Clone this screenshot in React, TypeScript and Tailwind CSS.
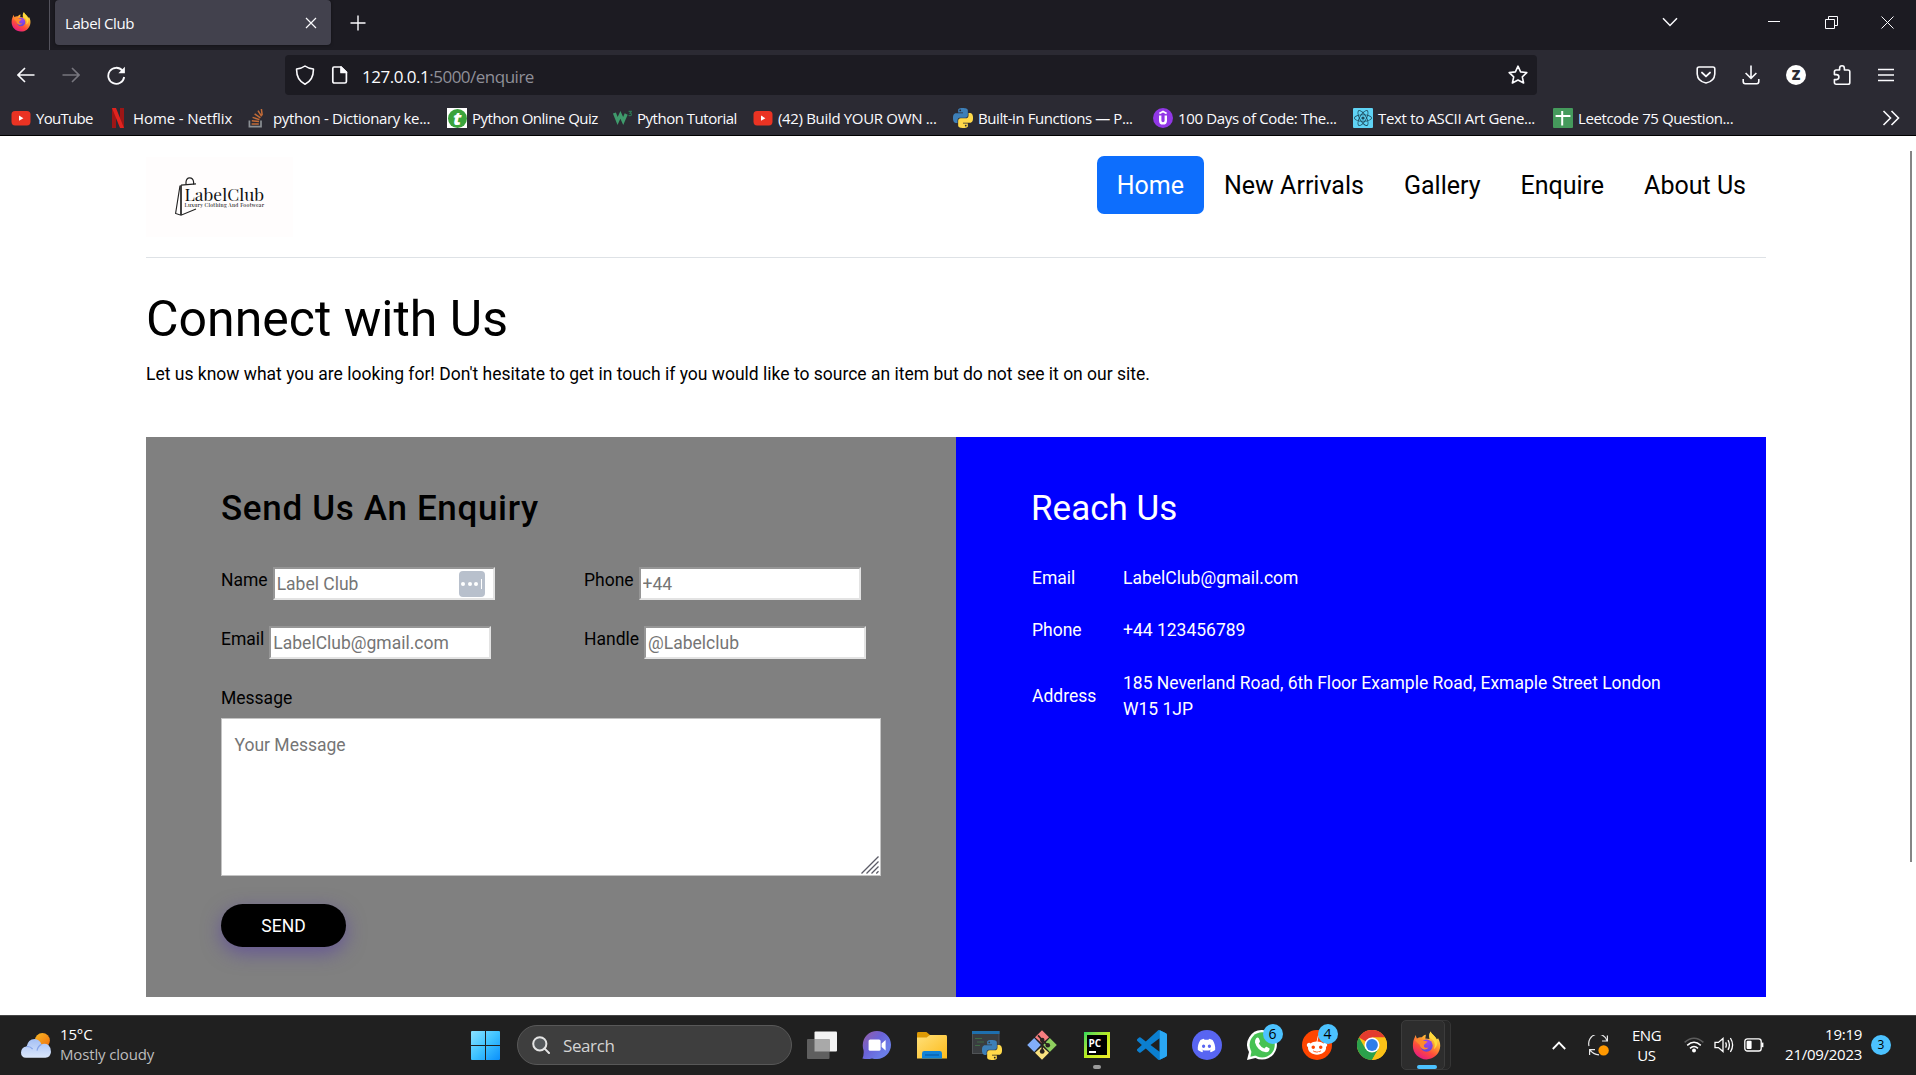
import type { ReactNode } from "react";
import { FaDiscord, FaReact, FaRedditAlien } from "react-icons/fa";

/* ---------- Brand marks ---------- */

function Firefox({ className }: { className: string }) {
  return (
    <svg viewBox="0 0 28 29" className={className}>
      <defs>
        <linearGradient id="ffBody" x1="0.8" y1="0.05" x2="0.25" y2="1">
          <stop offset="0" stopColor="#fff44f" />
          <stop offset="0.35" stopColor="#ffa130" />
          <stop offset="0.65" stopColor="#ff4c3b" />
          <stop offset="1" stopColor="#e5158a" />
        </linearGradient>
        <radialGradient id="ffGlobe" cx="0.6" cy="0.25" r="0.8">
          <stop offset="0" stopColor="#a044f0" />
          <stop offset="1" stopColor="#5b45d6" />
        </radialGradient>
      </defs>
      <path
        d="M18.2 0.4 C19.2 3.6 23.4 5.2 24.2 8.6 L25.6 7.2 C27.6 10.2 28.2 14 27.4 17.6 C26 24 20.4 28.4 14 28.4 C6.4 28.4 0.4 22.4 0.4 15 C0.4 11.4 1 8.6 2.4 6 L3 4 L4.4 7.4 C6 6.4 7.6 6 9.4 6.2 C10.6 4.8 11.8 4 13.4 3.8 L12.8 7.4 L17 8 C16 5 16.6 2.4 18.2 0.4Z"
        fill="url(#ffBody)"
      />
      <circle cx="14" cy="14.6" r="6.2" fill="url(#ffGlobe)" />
      <path d="M2.4 9 C5 7.4 8.4 7.6 10.4 9.6 C12 10.2 13.4 10 15 10.6 C14.4 12.4 12 12.6 11.4 14.4 C11.2 16.4 13.6 17.4 16 16.4 C14.6 19 9.6 19.2 8 16 C7 14 7.4 12.8 5.6 12.4Z" fill="#ff8a2c" />
      <path d="M18 7.6 C22 9.4 23.6 14 21.2 18.2 C24.6 16.4 25.6 12 24.2 8.6 C23.4 5.2 19.2 3.6 18.2 0.4 C16.6 2.4 16.8 5.4 18 7.6Z" fill="#ffd93b" />
    </svg>
  );
}

function Python({ className }: { className: string }) {
  return (
    <svg viewBox="0 0 24 24" className={className}>
      <path
        fill="#3d7fb8"
        d="M14.25.18l.9.2.73.26.59.3.45.32.34.34.25.34.16.33.1.3.04.26.02.2-.01.13V8.5l-.05.63-.13.55-.21.46-.26.38-.3.31-.33.25-.35.19-.35.14-.33.1-.3.07-.26.04-.21.02H8.77l-.69.05-.59.14-.5.22-.41.27-.33.32-.27.35-.2.36-.15.37-.1.35-.07.32-.04.27-.02.21v3.06H3.17l-.21-.03-.28-.07-.32-.12-.35-.18-.36-.26-.36-.36-.35-.46-.32-.59-.28-.73-.21-.88-.14-1.05-.05-1.23.06-1.22.16-1.04.24-.87.32-.71.36-.57.4-.44.42-.33.42-.24.4-.16.36-.1.32-.05.24-.01h.16l.06.01h8.16v-.83H6.18l-.01-2.75-.02-.37.05-.34.11-.31.17-.28.25-.26.31-.23.38-.2.44-.18.51-.15.58-.12.64-.1.71-.06.77-.04.84-.02 1.27.05zm-6.3 1.98l-.23.33-.08.41.08.41.23.34.33.22.41.09.41-.09.33-.22.23-.34.08-.41-.08-.41-.23-.33-.33-.22-.41-.09-.41.09z"
      />
      <path
        fill="#ffd94a"
        d="M21.04 6.11l.28.06.32.12.35.18.36.27.36.35.35.47.32.59.28.73.21.88.14 1.04.05 1.23-.06 1.23-.16 1.04-.24.86-.32.71-.36.57-.4.45-.42.33-.42.24-.4.16-.36.09-.32.05-.24.02-.16-.01h-8.22v.82h5.84l.01 2.76.02.36-.05.34-.11.31-.17.29-.25.25-.31.24-.38.2-.44.17-.51.15-.58.13-.64.09-.71.07-.77.04-.84.01-1.27-.04-1.07-.14-.9-.2-.73-.25-.59-.3-.45-.33-.34-.34-.25-.34-.16-.33-.1-.3-.04-.25-.02-.2.01-.13v-5.34l.05-.64.13-.54.21-.46.26-.38.3-.32.33-.24.35-.2.35-.14.33-.1.3-.06.26-.04.21-.02.13-.01h5.84l.69-.05.59-.14.5-.21.41-.28.33-.32.27-.35.2-.36.15-.36.1-.35.07-.32.04-.28.02-.21V6.07h2.09l.14.01zm-6.47 14.25l-.23.33-.08.41.08.41.23.33.33.23.41.08.41-.08.33-.23.23-.33.08-.41-.08-.41-.23-.33-.33-.23-.41-.08-.41.08z"
      />
    </svg>
  );
}

function YouTube() {
  return (
    <svg viewBox="0 0 20 20" className="size-5">
      <rect x="0.5" y="3" width="19" height="14.4" rx="3.6" fill="#ea3323" />
      <path d="M8 7.6 L12.4 10.2 L8 12.8Z" fill="#fff" />
    </svg>
  );
}

function Netflix() {
  return (
    <svg viewBox="0 0 20 20" className="size-5">
      <path d="M4 0H8V20H4ZM12 0H16V20H12Z" fill="#9c1616" />
      <path d="M4 0H8L16 20H12Z" fill="#e0231f" />
    </svg>
  );
}

function StackOverflow() {
  return (
    <svg viewBox="0 0 20 20" className="size-5" fill="none">
      <path d="M1.4 12.6V18.6H13V12.6" stroke="#8b8f94" strokeWidth="1.7" />
      <path d="M3.6 15.9H10.8M3.8 12.8L11 13.6M4.6 9.4L11.4 11.6M6.6 5.8L12.4 9.8M10 2.6L13.6 8.4M13.4 1L14.2 7.4" stroke="#c46c38" strokeWidth="1.5" />
    </svg>
  );
}

function W3() {
  return (
    <svg viewBox="0 0 20 20" className="size-5">
      <path d="M2.4 5 L5.6 13 L8.4 6.8 L11.2 13 L14.2 6" fill="none" stroke="#3f9a6c" strokeWidth="3.2" />
      <path d="M16.6 3.4H19.4L18 5.2Q19.8 5.4 19.4 7Q18.6 8.2 16.6 7.4" fill="none" stroke="#2c7452" strokeWidth="1.2" />
    </svg>
  );
}

function Udemy() {
  return (
    <svg viewBox="0 0 20 20" className="size-5">
      <circle cx="10" cy="10" r="10" fill="#9137e6" />
      <path d="M6.4 5.6 L10 3.4 L13.6 5.6" fill="none" stroke="#fff" strokeWidth="1.7" />
      <path d="M7.2 7.4V12.4Q7.2 15.4 10 15.4Q12.8 15.4 12.8 12.4V7.4" fill="none" stroke="#fff" strokeWidth="2.4" />
    </svg>
  );
}

function Sheet() {
  return (
    <svg viewBox="0 0 20 20" className="size-5">
      <rect width="20" height="20" rx="1" fill="#459a5c" />
      <path d="M2.6 8H17.4M9.2 3V17.6" stroke="#fff" strokeWidth="2" />
    </svg>
  );
}

/* ---------- Browser chrome ---------- */

function BookmarkItem({ icon, label, className }: { icon: ReactNode; label: string; className: string }) {
  return (
    <div className={`flex shrink-0 items-center gap-[5px] whitespace-nowrap ${className}`}>
      <span className="flex size-5 shrink-0 items-center justify-center">{icon}</span>
      <span>{label}</span>
    </div>
  );
}

function TabStrip() {
  return (
    <div className="flex h-[50px] bg-[#1c1b22]">
      <div className="flex w-[50px] border-r border-[#53525c] pt-3 pl-[11px]">
        <Firefox className="h-5 w-5" />
      </div>
      <div className="ml-[5px] flex h-[45px] w-[276px] items-center justify-between rounded bg-[#42414d] pr-[14px] pl-[10px] shadow-[0_0_3px_rgba(0,0,0,0.5)]">
        <span className="pt-[2px] text-[15px] tracking-[-0.4px] text-[#fbfbfe]">Label Club</span>
        <svg viewBox="0 0 12 12" className="size-3">
          <path d="M1 1 L11 11 M11 1 L1 11" stroke="#fbfbfe" strokeWidth="1.2" />
        </svg>
      </div>
      <svg viewBox="0 0 16 16" className="mt-[15px] ml-[19px] size-4">
        <path d="M8 0.5V15.5M0.5 8H15.5" stroke="#fbfbfe" strokeWidth="1.4" />
      </svg>
      <div className="ml-auto flex h-11 items-center text-[#fbfbfe]">
        <svg viewBox="0 0 16 10" className="h-[10px] w-4" fill="none" stroke="currentColor" strokeWidth="1.5">
          <path d="M1 1.2 L8 8.4 L15 1.2" />
        </svg>
        <svg viewBox="0 0 12 12" className="ml-[90px] size-3">
          <path d="M0 5.5H12" stroke="currentColor" />
        </svg>
        <svg viewBox="0 0 13 13" className="ml-[45px] size-[13px]" fill="none" stroke="currentColor">
          <path d="M0.5 3.5H9.5V12.5H0.5ZM3.5 3V0.5H12.5V9.5H10" />
        </svg>
        <svg viewBox="0 0 13 13" className="mr-[22px] ml-[43px] size-[13px]">
          <path d="M0.5 0.5 L12.5 12.5 M12.5 0.5 L0.5 12.5" stroke="currentColor" />
        </svg>
      </div>
    </div>
  );
}

function NavBar() {
  return (
    <div className="flex h-[50px] items-center text-[#fbfbfe]">
      <svg viewBox="0 0 18 16" className="ml-[17px] h-4 w-[18px]" fill="none" stroke="currentColor" strokeWidth="1.6">
        <path d="M17.5 8H1M8 1 L1 8 L8 15" />
      </svg>
      <svg viewBox="0 0 18 16" className="ml-[27px] h-4 w-[18px] text-[#77767e]" fill="none" stroke="currentColor" strokeWidth="1.6">
        <path d="M0.5 8H17M10 1 L17 8 L10 15" />
      </svg>
      <svg viewBox="0 0 19 19" className="ml-[27px] size-[19px]" fill="none" stroke="currentColor" strokeWidth="1.8">
        <path d="M15.4 4.6 A8 8 0 1 0 17.2 11" />
        <path d="M17.9 0.8V7.2H11.4Z" fill="currentColor" stroke="none" />
      </svg>
      <div className="ml-[159px] flex h-10 w-[1252px] items-center rounded bg-[#1c1b22]">
        <svg viewBox="0 0 20 20" className="ml-[10px] size-5" fill="none" stroke="currentColor" strokeWidth="1.6" strokeLinejoin="round">
          <path d="M10 1 C12 2.6 15 3.6 18.4 4 C18.6 11 16 16.4 10 19.2 C4 16.4 1.4 11 1.6 4 C5 3.6 8 2.6 10 1Z" />
        </svg>
        <svg viewBox="0 0 17 18" className="ml-[16px] h-[18px] w-[17px]" fill="none" stroke="currentColor" strokeWidth="1.7" strokeLinejoin="round">
          <path d="M3 1H10L15.4 6.4V15.4Q15.4 17 13.8 17H3.4Q1.8 17 1.8 15.4V2.4Q1.8 1 3 1Z" />
          <path d="M10 1V6.4H15.4Z" fill="currentColor" />
        </svg>
        <span className="ml-[14px] pt-[3px] text-[17px] tracking-[-0.5px] text-[#8f8f98]">
          <span className="text-[#fbfbfe]">127.0.0.1</span>:5000/enquire
        </span>
        <svg viewBox="0 0 20 20" className="mr-[9px] ml-auto size-5" fill="none" stroke="currentColor" strokeWidth="1.6" strokeLinejoin="round">
          <path d="M10 1.2 L12.6 6.9 L18.8 7.6 L14.3 11.8 L15.6 18 L10 15 L4.4 18 L5.7 11.8 L1.2 7.6 L7.4 6.9Z" />
        </svg>
      </div>
      <div className="mr-[22px] ml-auto flex items-center">
        <svg viewBox="0 0 20 18" className="h-[18px] w-5" fill="none" stroke="currentColor" strokeWidth="1.6" strokeLinejoin="round" strokeLinecap="round">
          <path d="M3 1H17Q18.8 1 18.8 3V8Q18.4 15.4 10 17Q1.6 15.4 1.2 8V3Q1.2 1 3 1Z" />
          <path d="M6 6.6 L10 10.4 L14 6.6" strokeWidth="1.9" />
        </svg>
        <svg viewBox="0 0 18 20" className="ml-[26px] h-5 w-[18px]" fill="none" stroke="currentColor" strokeWidth="1.6">
          <path d="M9 0.5V13M3.6 8 L9 13.4 L14.4 8M1.2 14V16.6Q1.2 18.8 3.2 18.8H14.8Q16.8 18.8 16.8 16.6V14" />
        </svg>
        <span className="ml-[26px] flex size-5 items-center justify-center rounded-full bg-white text-[14px] leading-none font-extrabold text-[#2b2a33]">
          Z
        </span>
        <svg viewBox="0 0 18 20" className="ml-[27px] h-5 w-[18px]" fill="none" stroke="currentColor" strokeWidth="1.6" strokeLinejoin="round">
          <path d="M1.4 9V7Q1.4 5 3.2 5H6.6V3.4A2.4 2.6 0 0 1 11.4 3.4V5H15Q16.8 5 16.8 6.8V17.4Q16.8 19.2 15 19.2H3.2Q1.4 19.2 1.4 17.4V14.6H3.4A2.4 2.4 0 0 0 3.4 9.6H1.4Z" />
        </svg>
        <svg viewBox="0 0 16 14" className="ml-[27px] h-[14px] w-4" stroke="currentColor" strokeWidth="1.5">
          <path d="M0 1.5H16M0 7H16M0 12.5H16" />
        </svg>
      </div>
    </div>
  );
}

function BookmarksBar() {
  return (
    <div className="flex h-[36px] items-center border-b border-black pt-px pl-[11px] text-[15px] text-[#fbfbfe]">
      <BookmarkItem className="w-[97px] tracking-[-0.7px]" icon={<YouTube />} label="YouTube" />
      <BookmarkItem className="w-[140px] tracking-[-0.1px]" icon={<Netflix />} label="Home - Netflix" />
      <BookmarkItem className="w-[199px] tracking-[-0.33px]" icon={<StackOverflow />} label="python - Dictionary ke..." />
      <BookmarkItem
        className="w-[165px] tracking-[-0.5px]"
        icon={
          <span className="flex size-5 items-center justify-center bg-white">
            <span className="flex size-[19px] items-center justify-center rounded-full bg-[#3aa33c] pb-px font-['Open_Sans',sans-serif] text-[18px] leading-none font-extrabold text-white italic">
              t
            </span>
          </span>
        }
        label="Python Online Quiz"
      />
      <BookmarkItem className="w-[141px] tracking-[-0.48px]" icon={<W3 />} label="Python Tutorial" />
      <BookmarkItem className="w-[200px] tracking-[-0.33px]" icon={<YouTube />} label="(42) Build YOUR OWN ..." />
      <BookmarkItem className="w-[200px] tracking-[-0.42px]" icon={<Python className="size-5" />} label="Built-in Functions — P..." />
      <BookmarkItem className="w-[200px] tracking-[-0.35px]" icon={<Udemy />} label="100 Days of Code: The..." />
      <BookmarkItem
        className="w-[200px] tracking-[-0.33px]"
        icon={
          <span className="flex size-5 items-center justify-center rounded-[1px] bg-[#5fd3f5] text-[#1d4a5c]">
            <FaReact className="size-[18px]" />
          </span>
        }
        label="Text to ASCII Art Gene..."
      />
      <BookmarkItem className="tracking-[-0.4px]" icon={<Sheet />} label="Leetcode 75 Question..." />
      <svg viewBox="0 0 18 16" className="mr-4 ml-auto h-4 w-[18px]" fill="none" stroke="#fbfbfe" strokeWidth="1.6">
        <path d="M1.5 1 L8.5 8 L1.5 15M9.5 1 L16.5 8 L9.5 15" />
      </svg>
    </div>
  );
}

/* ---------- Web page ---------- */

function Logo() {
  return (
    <div className="flex h-20 w-[147px] bg-[#fffdfd]">
      <svg viewBox="0 0 147 80" className="h-20 w-[147px]">
        <g fill="none" stroke="#222">
          <path d="M40 27.5V25Q40.4 20.8 43.6 20.8Q47.2 20.8 47.6 25V27.5" strokeWidth="1.2" />
          <path d="M35 28.2L50 26.8" strokeWidth="1.2" />
          <path d="M35 28.2V58" strokeWidth="1.7" />
          <path d="M34 28.6L29.6 56.4L35 58.2L50 52" strokeWidth="1.1" />
        </g>
        <text x="38.6" y="44" textLength="79.5" lengthAdjust="spacingAndGlyphs" className="font-['Playfair_Display','Liberation_Serif',serif] text-[17.5px]" fill="#111">
          LabelClub
        </text>
        <text x="38.6" y="50" textLength="79.5" lengthAdjust="spacing" className="font-['Playfair_Display','Liberation_Serif',serif] text-[5.2px] font-medium" fill="#222">
          Luxury Clothing And Footwear
        </text>
      </svg>
    </div>
  );
}

const navLinks = ["New Arrivals", "Gallery", "Enquire", "About Us"];

function Field({ label, placeholder, children }: { label: string; placeholder: string; children?: ReactNode }) {
  return (
    <label className="flex items-start">
      <span className="leading-[26px]">{label}</span>
      <span className="relative ml-[5px]">
        <input
          className="block h-[33px] w-[222px] border-2 border-t-[#969696] border-r-[#e3e3e3] border-b-[#e3e3e3] border-l-[#969696] bg-white pt-px pl-[2px] placeholder-[#757575] outline-none"
          placeholder={placeholder}
        />
        {children}
      </span>
    </label>
  );
}

function EnquiryPanel() {
  return (
    <section className="w-[810px] bg-[#808080] pt-[51px] pl-[75px] text-black">
      <h2 className="text-[35px] leading-[42px] font-medium tracking-[0.67px]">Send Us An Enquiry</h2>
      <div className="mt-[37px] grid grid-cols-[363px_1fr] gap-y-[26px]">
        <Field label="Name" placeholder="Label Club">
          <span className="absolute top-[4px] right-[10px] flex size-[26px] items-center justify-center gap-[2.5px] rounded bg-[#b8c0cc]">
            <i className="size-1 rounded-full bg-white" />
            <i className="size-1 rounded-full bg-white" />
            <i className="size-1 rounded-full bg-white" />
            <i className="h-[10px] w-px bg-white" />
          </span>
        </Field>
        <Field label="Phone" placeholder="+44" />
        <Field label="Email" placeholder="LabelClub@gmail.com" />
        <Field label="Handle" placeholder="@Labelclub" />
      </div>
      <div className="mt-[26px] leading-[26px]">Message</div>
      <div className="relative mt-[7px] h-[158px] w-[660px]">
        <textarea
          className="block h-full w-full resize-none border border-[#c4c4c4] bg-white px-[12.5px] py-[13px] leading-[26px] placeholder-[#757575] outline-none"
          placeholder="Your Message"
        />
        <svg viewBox="0 0 18 18" className="absolute right-[2px] bottom-[2px] size-[18px]" stroke="#5b5b66" strokeWidth="1.3">
          <path d="M0.5 17.5L17.5 0.5M5.5 17.5L17.5 5.5M10.5 17.5L17.5 10.5M15.3 17.5L17.5 15.3" />
        </svg>
      </div>
      <button className="mt-7 block h-[43px] w-[125px] rounded-full bg-black pt-px text-white shadow-[0_6px_19px_rgba(74,44,170,0.5)]">SEND</button>
    </section>
  );
}

function ReachPanel() {
  return (
    <section className="w-[810px] bg-[#0000ff] pt-[51px] pl-[75px] text-white">
      <h2 className="text-[35px] leading-[42px]">Reach Us</h2>
      <dl className="mt-[35px] grid grid-cols-[91px_560px] items-center gap-y-[26px] pl-px leading-[26.25px]">
        <dt>Email</dt>
        <dd>LabelClub@gmail.com</dd>
        <dt>Phone</dt>
        <dd>+44 123456789</dd>
        <dt>Address</dt>
        <dd>
          185 Neverland Road, 6th Floor Example Road, Exmaple Street London
          <br />
          W15 1JP
        </dd>
      </dl>
    </section>
  );
}

function Page() {
  return (
    <div className="flex h-[879px] justify-between overflow-hidden bg-white font-[Roboto,sans-serif] text-[17.5px] text-black">
      <main className="ml-[146px] w-[1620px]">
        <header className="flex h-[122px] justify-between border-b border-[#dee2e6]">
          <div className="pt-[21px]">
            <Logo />
          </div>
          <nav className="flex pt-5 text-[25px] leading-[37.5px]">
            <a className="h-[58px] rounded-[7px] bg-[#0d6efd] px-5 pt-[11px] text-white">Home</a>
            {navLinks.map((l) => (
              <a key={l} className="px-5 pt-[11px]">
                {l}
              </a>
            ))}
          </nav>
        </header>
        <h1 className="mt-[31px] text-[50px] leading-[60px]">Connect with Us</h1>
        <p className="mt-3 leading-[26px]">
          Let us know what you are looking for! Don't hesitate to get in touch if you would like to source an item but do not see it on our site.
        </p>
        <div className="mt-[50px] flex h-[560px]">
          <EnquiryPanel />
          <ReachPanel />
        </div>
      </main>
      <div className="mt-[15px] mr-1 h-[711px] w-[2px] bg-[#858585]" />
    </div>
  );
}

/* ---------- Taskbar ---------- */

function Weather() {
  return (
    <svg viewBox="0 0 30 25" className="h-[25px] w-[30px]">
      <defs>
        <linearGradient id="sun" x1="0" y1="0" x2="1" y2="1">
          <stop offset="0" stopColor="#f8b824" />
          <stop offset="1" stopColor="#ee6c0c" />
        </linearGradient>
        <linearGradient id="cloud" x1="0" y1="0" x2="0" y2="1">
          <stop offset="0" stopColor="#a5c0f5" />
          <stop offset="1" stopColor="#dbe7fb" />
        </linearGradient>
      </defs>
      <circle cx="21.4" cy="7.6" r="7.5" fill="url(#sun)" />
      <path d="M5 24.8Q0 24.4 0 19.4Q0.4 14 5.6 13.6Q7 6.4 13.6 6Q18.6 6.2 20.4 11.4Q24 9.8 27.4 12Q30 14.4 30 19Q29.4 24.4 24.4 24.8Z" fill="url(#cloud)" />
      <path d="M5.6 13.6Q9 13 11.6 16M16 17.6Q17 13 20.4 11.4" fill="none" stroke="#86a5ea" strokeWidth="1.2" />
    </svg>
  );
}

function WindowsLogo() {
  return (
    <svg viewBox="0 0 29 29" className="size-[29px]">
      <defs>
        <linearGradient id="win" x1="0" y1="0" x2="1" y2="1">
          <stop offset="0" stopColor="#8be3ff" />
          <stop offset="0.5" stopColor="#3fc3ff" />
          <stop offset="1" stopColor="#0a8ffb" />
        </linearGradient>
      </defs>
      <path d="M1 0H14V14H0V1Q0 0 1 0ZM15 0H28Q29 0 29 1V14H15ZM0 15H14V29H1Q0 29 0 28ZM15 15H29V28Q29 29 28 29H15Z" fill="url(#win)" />
    </svg>
  );
}

function TaskView() {
  return (
    <svg viewBox="0 0 30 28" className="h-7 w-[30px]">
      <rect x="7.5" y="0.5" width="22.5" height="20" rx="1" fill="#f4f4f4" />
      <rect x="0" y="8" width="22.5" height="20" rx="1" fill="#5f5f5f" />
      <path d="M7.5 8H22.5V20.5H7.5Z" fill="#a9a9a9" />
    </svg>
  );
}

function Chat() {
  return (
    <svg viewBox="0 0 29 28" className="h-7 w-[29px]">
      <defs>
        <linearGradient id="chat" x1="0.1" y1="0.1" x2="0.8" y2="0.7">
          <stop offset="0" stopColor="#8e5fae" />
          <stop offset="0.5" stopColor="#6a63d8" />
          <stop offset="1" stopColor="#6b7de8" />
        </linearGradient>
      </defs>
      <path d="M15 0C22.8 0 29 6 29 13.8C29 21.8 22.8 28 15 28Q12 28 10 27.4Q4 28.6 0.4 27.6Q2 24.4 1.6 19.4Q0.6 17 0.8 13.8C1 6 7 0 15 0Z" fill="url(#chat)" />
      <rect x="6.6" y="8.4" width="12" height="11.4" rx="1.6" fill="#fff" />
      <path d="M19.6 12.4L23.6 9V19.4L19.6 16Z" fill="#fff" />
    </svg>
  );
}

function Explorer() {
  return (
    <svg viewBox="0 0 30 27" className="h-[27px] w-[30px]">
      <defs>
        <linearGradient id="folder" x1="0" y1="0" x2="1" y2="1">
          <stop offset="0" stopColor="#ffe07a" />
          <stop offset="1" stopColor="#fdbb1a" />
        </linearGradient>
      </defs>
      <path d="M0 1.4Q0 0 1.4 0H9.4L13 3V8H0Z" fill="#dd9a05" />
      <path d="M0 5.6H9.6L13 3H28.6Q30 3 30 4.4V26.6H0Z" fill="url(#folder)" />
      <path d="M5 26.6V21.4Q5 19 7.4 19H22.6Q25 19 25 21.4V26.6Z" fill="#1283d8" />
      <path d="M8 23H22" stroke="#0a5ba8" strokeWidth="1.2" />
    </svg>
  );
}

function PythonConsole() {
  return (
    <span className="relative h-[30px] w-[30px]">
      <svg viewBox="0 0 30 30" className="size-[30px]">
        <rect x="0.5" y="1.5" width="26.5" height="22" fill="#3a3d40" stroke="#505356" />
        <rect x="0" y="1" width="27.5" height="3" fill="#1e6fae" />
        <path d="M3 8.5H10M5 12H12M3 15.5H8" stroke="#3f6b45" strokeWidth="1.2" />
      </svg>
      <Python className="absolute right-0 bottom-0 size-5" />
    </span>
  );
}

function Git() {
  return (
    <svg viewBox="0 0 30 30" className="size-[30px]">
      <path d="M15 0.2L22 7.2L15 13.6L8 7.2Z" fill="#f77e80" />
      <path d="M0.2 15L7.2 8L13.8 15L7.2 22Z" fill="#82aef8" />
      <path d="M29.8 15L22.8 8L16.2 15L22.8 22Z" fill="#8fd05f" />
      <path d="M15 29.8L8 22.8L15 16.4L22 22.8Z" fill="#fae27f" />
      <path d="M11 5.4L15.2 10V22M15.2 10L20.6 15.2" fill="none" stroke="#2a2320" strokeWidth="1.7" />
      <circle cx="15.2" cy="10" r="2.3" fill="#2a2320" />
      <circle cx="20.8" cy="15.2" r="2.3" fill="#2a2320" />
      <circle cx="15.2" cy="21.4" r="2.4" fill="#2a2320" />
    </svg>
  );
}

function PyCharm() {
  return (
    <span className="flex size-[26px] items-center justify-center bg-linear-to-br from-[#21d75a] via-[#b8ec1e] to-[#f2ea2a]">
      <span className="flex size-[20px] flex-col bg-black pt-[3px] pl-[2px] text-white">
        <span className="text-[10px] leading-[10px] font-bold">PC</span>
        <i className="mt-[3px] h-[1.5px] w-[7px] bg-white" />
      </span>
    </span>
  );
}

function VsCode() {
  return (
    <svg viewBox="0 0 24 24" className="size-[30px]">
      <path
        fill="#0b7fd0"
        d="M23.15 2.587L18.21.21a1.494 1.494 0 0 0-1.705.29l-9.46 8.63-4.12-3.128a.999.999 0 0 0-1.276.057L.327 7.261A1 1 0 0 0 .326 8.74L3.899 12 .326 15.26a1 1 0 0 0 .001 1.479L1.65 17.94a.999.999 0 0 0 1.276.057l4.12-3.128 9.46 8.63a1.492 1.492 0 0 0 1.704.29l4.942-2.377A1.5 1.5 0 0 0 24 20.06V3.939a1.5 1.5 0 0 0-.85-1.352zm-5.146 14.861L10.826 12l7.178-5.448v10.896z"
      />
      <path d="M18.2.2L23.15 2.587A1.5 1.5 0 0 1 24 3.94V20.06A1.5 1.5 0 0 1 23.15 21.4L18.2 23.8Z" fill="#2aa7f3" />
    </svg>
  );
}

function Chrome() {
  return (
    <svg viewBox="0 0 30 30" className="size-[30px]">
      <circle cx="15" cy="15" r="15" fill="#fbc117" />
      <path d="M15 15L2 7.5A15 15 0 0 1 28 7.5H15Z" fill="#e33b2e" />
      <path d="M2 7.5A15 15 0 0 0 15 30L21.5 18.75L8.5 18.75Z" fill="#2ba14b" />
      <path d="M15 7.5H28A15 15 0 0 1 15 30L21.5 18.75Z" fill="#fbc117" />
      <circle cx="15" cy="15" r="7.5" fill="#fff" />
      <circle cx="15" cy="15" r="5.9" fill="#2f7de9" />
    </svg>
  );
}

function Badge({ n }: { n: number }) {
  return (
    <span className="absolute -top-[6px] -right-[6px] flex size-5 items-center justify-center rounded-full bg-[#4cc2ff] text-[14px] leading-none text-black">
      {n}
    </span>
  );
}

function WhatsApp() {
  return (
    <span className="relative size-[30px]">
      <svg viewBox="0 0 30 30" className="size-[30px]">
        <path d="M15.2 0A14.8 14.8 0 1 1 8.4 28L0 30L2 22A14.8 14.8 0 0 1 15.2 0Z" fill="#fff" />
        <circle cx="15.2" cy="14.8" r="12.6" fill="#46c253" />
        <path d="M3.4 26.8L5 19L11 25Z" fill="#46c253" />
        <path d="M9 8.4Q10.6 6.8 11.8 8.2L13 11Q13.2 12 11.8 13.4Q13.8 17 17.4 18.4Q18.8 16.6 19.6 16.8L22.6 18.4Q22.6 22 19 22.2Q10.4 21 8 12.4Q7.8 9.8 9 8.4Z" fill="#fff" />
      </svg>
      <Badge n={6} />
    </span>
  );
}

function Reddit() {
  return (
    <span className="relative flex size-[30px] items-center justify-center rounded-full bg-[#ff4500] text-white">
      <FaRedditAlien className="size-[22px]" />
      <Badge n={4} />
    </span>
  );
}

function Slot({ children }: { children: ReactNode }) {
  return <div className="relative flex h-[60px] w-[55px] items-center justify-center">{children}</div>;
}

function Taskbar() {
  return (
    <footer className="flex h-[60px] border-t border-[#454545] bg-[#202020] text-[15px] text-white">
      <div className="flex w-[471px] pl-[21px]">
        <div className="pt-[17px]">
          <Weather />
        </div>
        <div className="ml-[9px] pt-2 leading-5 tracking-[-0.15px]">
          <div>15°C</div>
          <div className="text-[#bdbdbd]">Mostly cloudy</div>
        </div>
      </div>
      <div className="pt-[15px]">
        <WindowsLogo />
      </div>
      <div className="mt-[9px] ml-[17px] flex h-10 w-[275px] items-center rounded-full border border-[#585858] bg-[#3e3e3e] pl-[14px]">
        <svg viewBox="0 0 18 18" className="size-[18px]" fill="none" stroke="#e4e4e4" strokeWidth="2">
          <circle cx="7.8" cy="7.8" r="6.6" fill="#55595c" />
          <path d="M12.4 12.4L17 17" strokeLinecap="round" />
        </svg>
        <span className="ml-[13px] pt-[2px] text-[17px] tracking-[-0.4px] text-[#d4d4d4]">Search</span>
      </div>
      <div className="-mt-px ml-[2px] flex">
        <Slot><TaskView /></Slot>
        <Slot><Chat /></Slot>
        <Slot><Explorer /></Slot>
        <Slot><PythonConsole /></Slot>
        <Slot><Git /></Slot>
        <Slot>
          <PyCharm />
          <i className="absolute bottom-[6px] h-1 w-2 rounded-full bg-[#9a9a9a]" />
        </Slot>
        <Slot><VsCode /></Slot>
        <Slot>
          <span className="flex size-[30px] items-center justify-center rounded-full bg-[#5865f2]">
            <FaDiscord className="size-[19px]" />
          </span>
        </Slot>
        <Slot><WhatsApp /></Slot>
        <Slot><Reddit /></Slot>
        <Slot><Chrome /></Slot>
        <Slot>
          <span className="absolute top-[5px] left-[9px] h-[50px] w-[43px] rounded-[5px] border border-[#353535] bg-[#262626]" />
          <span className="absolute top-[5px] left-[2px] h-[50px] w-[44px] rounded-[5px] border border-[#3c3c3c] bg-[#2d2d2d]" />
          <Firefox className="relative size-[29px]" />
          <i className="absolute bottom-[6px] h-1 w-5 rounded-full bg-[#4cc2ff]" />
        </Slot>
      </div>
      <div className="ml-auto flex">
        <svg viewBox="0 0 14 9" className="mt-[25px] h-[9px] w-[14px]" fill="none" stroke="#fff" strokeWidth="1.8">
          <path d="M0.8 8L7 1.6L13.2 8" />
        </svg>
        <svg viewBox="0 0 21 21" className="mt-[19px] ml-[22px] size-[21px]" fill="none" stroke="#e8e8e8" strokeWidth="1.2">
          <path d="M1 11A9.4 9.4 0 0 1 19 5.6M19.4 0.6V6H14" />
          <path d="M1.6 20V14.6H7M2 14.8Q5 19.4 11 19.8" />
          <circle cx="15.6" cy="15.4" r="5.2" fill="#ff9800" stroke="none" />
        </svg>
        <div className="ml-[22px] w-[31px] pt-[9px] text-center leading-5 tracking-[-0.45px]">
          ENG
          <br />
          US
        </div>
        <svg viewBox="0 0 20 16" className="mt-[21px] ml-[22px] h-4 w-5" fill="none" stroke="#fff" strokeWidth="1.5">
          <path d="M0.6 5.4Q10 -3 19.4 5.4" stroke="#5c5c5c" />
          <path d="M3.2 8.4Q10 2 16.8 8.4M6 11.4Q10 7.6 14 11.4" />
          <circle cx="10" cy="13.4" r="2" fill="#fff" stroke="none" />
        </svg>
        <svg viewBox="0 0 20 18" className="mt-5 ml-[10px] h-[18px] w-5" fill="none" stroke="#fff" strokeWidth="1.3">
          <path d="M1 6.4H4.4L9 2.4V15.6L4.4 11.6H1ZM11.6 6.4Q13 9 11.6 11.6M14 4.2Q16.8 9 14 13.8M16.4 2Q20.8 9 16.4 16" />
        </svg>
        <svg viewBox="0 0 20 14" className="mt-[22px] ml-[10px] h-[14px] w-5" fill="none" stroke="#fff" strokeWidth="1.3">
          <rect x="0.8" y="0.8" width="16.4" height="12.2" rx="2.6" />
          <rect x="2.6" y="2.8" width="5" height="8.2" rx="1" fill="#fff" stroke="none" />
          <path d="M18.4 4.6V9.2" strokeWidth="2" />
        </svg>
        <div className="w-[98px] pt-2 text-right leading-5 tracking-[-0.27px]">
          19:19
          <br />
          21/09/2023
        </div>
        <span className="mt-[19px] mr-[25px] ml-[9px] flex size-5 items-center justify-center rounded-full bg-[#4cc2ff] text-[12px] leading-none text-black">3</span>
      </div>
    </footer>
  );
}

export default function App() {
  return (
    <div className="flex h-[1075px] w-[1916px] flex-col overflow-hidden bg-[#2b2a33] font-['Open_Sans','Noto_Sans',sans-serif]">
      <TabStrip />
      <NavBar />
      <BookmarksBar />
      <Page />
      <Taskbar />
    </div>
  );
}
